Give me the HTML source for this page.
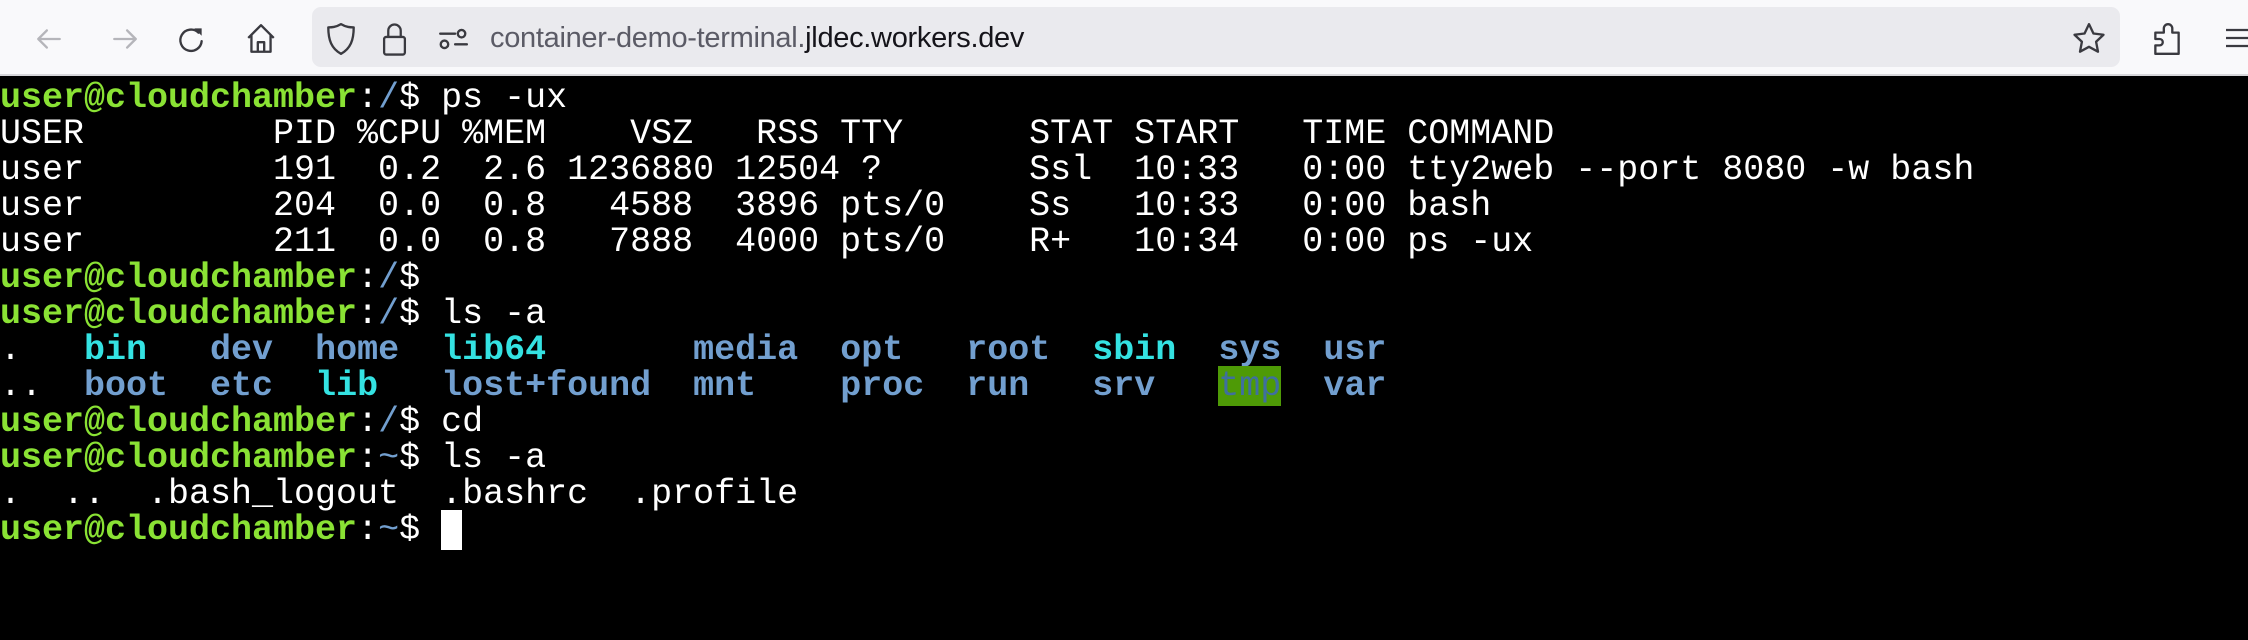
<!DOCTYPE html>
<html><head><meta charset="utf-8"><style>
html,body{margin:0;padding:0;width:2248px;height:640px;overflow:hidden;background:#000}
.tb{position:absolute;left:0;top:0;width:2248px;height:74px;background:#f9f9fb;border-bottom:2px solid #d6d6da}
.url{position:absolute;left:312px;top:7px;width:1808px;height:60px;background:#eaeaee;border-radius:9px}
.ut{position:absolute;left:490px;top:22px;font:29px "Liberation Sans",sans-serif;color:#5b5b66;white-space:nowrap;letter-spacing:-0.3px}
.ut b{font-weight:normal;color:#15141a}
svg.i{position:absolute}
.term{position:absolute;left:0;top:80px;margin:0;font:35px/36px "Liberation Mono",monospace;color:#fff;white-space:pre}
.g{color:#8ae234;font-weight:bold}.b{color:#729fcf;font-weight:bold}.c{color:#34e2e2;font-weight:bold}
.s{color:#729fcf}
.t{background:#4e9a06;color:#3f6f9f}
.cur{background:#fff}
</style></head><body>
<div class="tb">
<div class="url"></div>
<svg class="i" style="left:34px;top:24px" width="30" height="30" viewBox="0 0 28 28" fill="none" stroke="#b5b5ba" stroke-width="2.2" stroke-linecap="round" stroke-linejoin="round"><path d="M24 14H4M12 6l-8 8 8 8"/></svg>
<svg class="i" style="left:110px;top:24px" width="30" height="30" viewBox="0 0 28 28" fill="none" stroke="#b5b5ba" stroke-width="2.2" stroke-linecap="round" stroke-linejoin="round"><path d="M4 14h20M16 6l8 8-8 8"/></svg>
<svg class="i" style="left:175px;top:23px" width="32" height="32" viewBox="0 0 30 30" fill="none" stroke="#3a3a40" stroke-width="2.2" stroke-linecap="round"><path d="M22 9A10 10 0 1 0 25 17"/><path d="M18 5h7v7z" fill="#3a3a40" stroke="none"/></svg>
<svg class="i" style="left:245px;top:22px" width="32" height="34" viewBox="0 0 30 32" fill="none" stroke="#3a3a40" stroke-width="2.2" stroke-linejoin="round"><path d="M3 15L15 3l12 12M6 12v16h18V12"/><path d="M12 28v-9h6v9"/></svg>
<svg class="i" style="left:325px;top:21px" width="32" height="36" viewBox="0 0 30 34" fill="none" stroke="#3a3a40" stroke-width="2.2" stroke-linejoin="round"><path d="M15 3C10 6 6 6 3 6c0 12 3 20 12 25 9-5 12-13 12-25-3 0-7 0-12-3z"/></svg>
<svg class="i" style="left:381px;top:20px" width="27" height="38" viewBox="0 0 26 36" fill="none" stroke="#3a3a40" stroke-width="2.2" stroke-linejoin="round"><rect x="3" y="16" width="20" height="17" rx="2"/><path d="M7 16V10a6 6 0 0 1 12 0v6"/></svg>
<svg class="i" style="left:437px;top:26px" width="32" height="26" viewBox="0 0 30 24" fill="none" stroke="#3a3a40" stroke-width="2.2" stroke-linecap="round"><path d="M3 7h14M17 17h11"/><circle cx="23" cy="7" r="3.5"/><circle cx="7" cy="17" r="3.5"/></svg>
<div class="ut">container-demo-terminal.<b>jldec.workers.dev</b></div>
<svg class="i" style="left:2071px;top:21px" width="36" height="36" viewBox="0 0 34 34" fill="none" stroke="#3a3a40" stroke-width="2.2" stroke-linejoin="round"><path d="M17 3l4.2 8.8 9.5 1.2-7 6.6 1.8 9.4L17 24.4 8.5 29l1.8-9.4-7-6.6 9.5-1.2z"/></svg>
<svg class="i" style="left:2151px;top:21px" width="32" height="36" viewBox="0 0 30 34" fill="none" stroke="#3a3a40" stroke-width="2.2" stroke-linejoin="round"><path d="M4 11h8V7a4 4 0 0 1 8 0v4h6v20H4v-8h4a3 3 0 0 0 0-6H4z"/></svg>
<svg class="i" style="left:2224px;top:27px" width="24" height="22" viewBox="0 0 24 22" fill="none" stroke="#3a3a40" stroke-width="2.2"><path d="M2 3h24M2 11h24M2 19h24"/></svg>
</div>
<pre class="term"><span class="g">user@cloudchamber</span>:<span class="s">/</span>$ ps -ux
USER         PID %CPU %MEM    VSZ   RSS TTY      STAT START   TIME COMMAND
user         191  0.2  2.6 1236880 12504 ?       Ssl  10:33   0:00 tty2web --port 8080 -w bash
user         204  0.0  0.8   4588  3896 pts/0    Ss   10:33   0:00 bash
user         211  0.0  0.8   7888  4000 pts/0    R+   10:34   0:00 ps -ux
<span class="g">user@cloudchamber</span>:<span class="s">/</span>$
<span class="g">user@cloudchamber</span>:<span class="s">/</span>$ ls -a
.   <span class="c">bin</span>   <span class="b">dev</span>  <span class="b">home</span>  <span class="c">lib64</span>       <span class="b">media</span>  <span class="b">opt</span>   <span class="b">root</span>  <span class="c">sbin</span>  <span class="b">sys</span>  <span class="b">usr</span>
..  <span class="b">boot</span>  <span class="b">etc</span>  <span class="c">lib</span>   <span class="b">lost+found</span>  <span class="b">mnt</span>    <span class="b">proc</span>  <span class="b">run</span>   <span class="b">srv</span>   <span class="t">tmp</span>  <span class="b">var</span>
<span class="g">user@cloudchamber</span>:<span class="s">/</span>$ cd
<span class="g">user@cloudchamber</span>:<span class="s">~</span>$ ls -a
.  ..  .bash_logout  .bashrc  .profile
<span class="g">user@cloudchamber</span>:<span class="s">~</span>$ <span class="cur"> </span></pre>
</body></html>
